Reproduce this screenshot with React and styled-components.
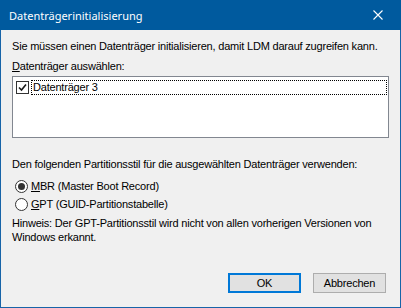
import React from "react";
import styled, { createGlobalStyle } from "styled-components";

const Global = createGlobalStyle`
  html, body {
    margin: 0;
    padding: 0;
    background: #f0f0f0;
  }
  * {
    box-sizing: border-box;
  }
`;

function App() {
  return (
    <>
      <Global />
      <Window>
        <TitleBar>
          <Title>Datenträgerinitialisierung</Title>
          <CloseButton aria-label="Schließen">
            <svg width="10" height="10" viewBox="0 0 10 10">
              <path d="M0.5 0.5 L9.5 9.5 M9.5 0.5 L0.5 9.5" stroke="#fff" strokeWidth="1.1" />
            </svg>
          </CloseButton>
        </TitleBar>
        <Body>
          <Text top={10}>
            Sie müssen einen Datenträger initialisieren, damit LDM darauf zugreifen kann.
          </Text>
          <Text top={7}>
            <u>D</u>atenträger auswählen:
          </Text>
          <ListBox>
            <ListItem>
              <CheckBox>
                <svg width="9" height="9" viewBox="0 0 9 9">
                  <path d="M1 4.5 L3.5 7 L8 1.5" stroke="#1a1a1a" strokeWidth="1.6" fill="none" />
                </svg>
              </CheckBox>
              <ItemLabel>Datenträger 3</ItemLabel>
            </ListItem>
          </ListBox>
          <Text top={20}>
            Den folgenden Partitionsstil für die ausgewählten Datenträger verwenden:
          </Text>
          <RadioGroup>
            <RadioRow>
              <Radio checked />
              <span>
                <u>M</u>BR (Master Boot Record)
              </span>
            </RadioRow>
            <RadioRow>
              <Radio />
              <span>
                <u>G</u>PT (GUID-Partitionstabelle)
              </span>
            </RadioRow>
          </RadioGroup>
          <Note>
            Hinweis: Der GPT-Partitionsstil wird nicht von allen vorherigen Versionen von
            Windows erkannt.
          </Note>
          <Buttons>
            <Button primary>OK</Button>
            <Button>Abbrechen</Button>
          </Buttons>
        </Body>
      </Window>
    </>
  );
}

export default App;

const Window = styled.div`
  width: 401px;
  height: 308px;
  border: 1px solid #1764a8;
  border-top: none;
  background: #f0f0f0;
  display: flex;
  flex-direction: column;
  font-family: "Liberation Sans", Arial, sans-serif;
  font-size: 11px;
  letter-spacing: -0.2px;
  color: #000;
`;

const TitleBar = styled.div`
  height: 30px;
  background: #005a9e;
  display: flex;
  align-items: center;
  justify-content: space-between;
  padding-left: 9px;
  margin: 0 -1px;
`;

const Title = styled.div`
  font-family: "Noto Sans", "Open Sans", sans-serif;
  font-size: 11px;
  letter-spacing: 0;
  color: #fff;
`;

const CloseButton = styled.div`
  width: 46px;
  height: 30px;
  display: flex;
  align-items: center;
  justify-content: center;
`;

const Body = styled.div`
  flex: 1;
  padding: 0 11px;
  display: flex;
  flex-direction: column;
`;

const Text = styled.div`
  line-height: 13px;
  margin-top: ${(p) => p.top}px;
  white-space: nowrap;
`;

const ListBox = styled.div`
  margin-top: 3px;
  height: 62px;
  background: #fff;
  border: 1px solid #828790;
  padding: 2px 1px;
`;

const ListItem = styled.div`
  display: flex;
  align-items: center;
  height: 16px;
`;

const CheckBox = styled.div`
  width: 13px;
  height: 13px;
  margin: 0 2px 0 2px;
  border: 1px solid #333;
  background: #fff;
  display: flex;
  align-items: center;
  justify-content: center;
`;

const ItemLabel = styled.div`
  flex: 1;
  height: 15px;
  line-height: 13px;
  padding-left: 1px;
  border: 1px dotted #000;
`;

const RadioGroup = styled.div`
  margin-top: 6px;
  display: flex;
  flex-direction: column;
`;

const RadioRow = styled.div`
  display: flex;
  align-items: center;
  height: 18px;
  gap: 3px;
  padding-left: 3px;
`;

const Radio = styled.div`
  width: 13px;
  height: 13px;
  border-radius: 50%;
  border: 1px solid #333;
  background: #fff;
  display: flex;
  align-items: center;
  justify-content: center;
  &::after {
    content: "";
    width: 7px;
    height: 7px;
    border-radius: 50%;
    background: ${(p) => (p.checked ? "#333" : "transparent")};
  }
`;

const Note = styled.div`
  margin-top: 3px;
  line-height: 14px;
  width: 372px;
`;

const Buttons = styled.div`
  margin-top: auto;
  margin-bottom: 14px;
  display: flex;
  justify-content: flex-end;
  gap: 12px;
  padding-right: 3px;
`;

const Button = styled.div`
  width: 73px;
  height: 20px;
  display: flex;
  align-items: center;
  justify-content: center;
  background: #e1e1e1;
  border: ${(p) => (p.primary ? "2px solid #0078d7" : "1px solid #adadad")};
`;
